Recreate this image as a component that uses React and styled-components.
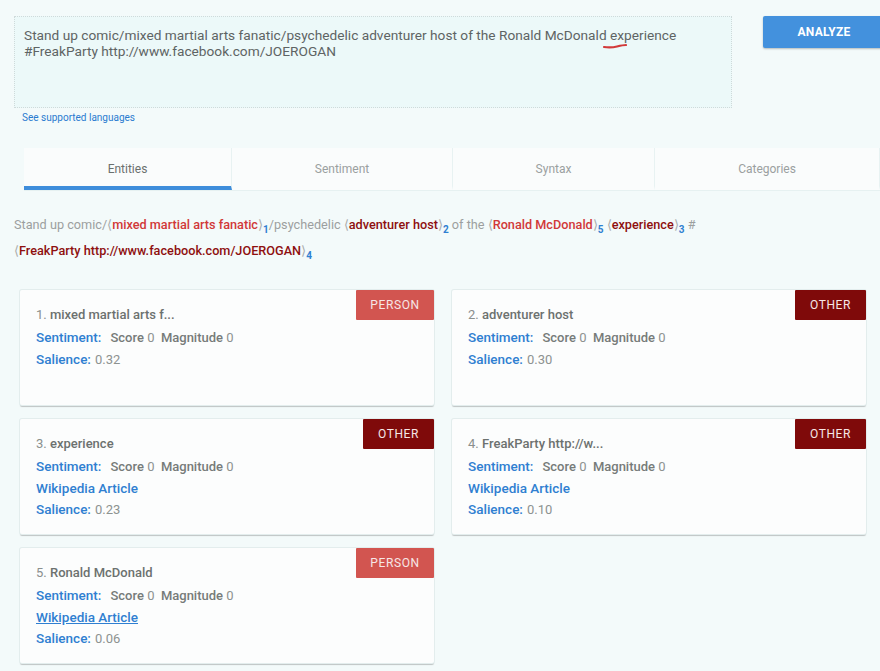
import React from 'react';
import styled, { createGlobalStyle } from 'styled-components';

const GlobalStyle = createGlobalStyle`
  html, body {
    margin: 0;
    padding: 0;
    background: #f3fafa;
    font-family: Roboto, 'Liberation Sans', Arial, sans-serif;
  }
`;

const Page = styled.div`
  width: 880px;
  height: 671px;
  overflow: hidden;
  box-sizing: border-box;
  padding-top: 16px;
`;

const InputRow = styled.div`
  display: flex;
  align-items: flex-start;
  padding-left: 14px;
  gap: 31px;
`;

const TextBox = styled.div`
  position: relative;
  flex-shrink: 0;
  width: 718px;
  height: 92px;
  box-sizing: border-box;
  padding: 10px 9px;
  background: #ecf9f9;
  border: 1px dotted #cfdada;
  color: #5e6464;
  font-size: 13.7px;
  line-height: 16px;
`;

const Squiggle = styled.svg`
  position: absolute;
  left: 588px;
  top: 26px;
`;

const AnalyzeButton = styled.button`
  width: 122px;
  height: 32px;
  flex-shrink: 0;
  border: none;
  border-radius: 2px;
  background: #4391dd;
  color: #fff;
  font-family: Roboto, 'Liberation Sans', Arial, sans-serif;
  font-size: 12px;
  font-weight: 700;
  letter-spacing: 0.3px;
  box-shadow: 0 1px 2px rgba(0, 0, 0, 0.25);
`;

const LangLink = styled.a`
  display: block;
  margin: 4px 0 0 22px;
  font-size: 10px;
  color: #2a7bd0;
  text-decoration: none;
`;

const TabBar = styled.div`
  display: flex;
  margin: 25px 0 0 24px;
  height: 42px;
  background: #fafcfc;
  border-bottom: 1px solid #e6f1f1;
`;

const Tab = styled.div`
  width: ${(p) => p.w}px;
  display: flex;
  align-items: center;
  justify-content: center;
  box-sizing: border-box;
  border-right: 1px solid #e8f2f2;
  font-size: 12px;
  color: ${(p) => (p.active ? '#6a706e' : '#9aa0a0')};
  border-bottom: 4px solid ${(p) => (p.active ? '#3e8ddb' : 'transparent')};
  padding-top: 3px;
`;

const Annotated = styled.p`
  margin: 21px 0 0 14px;
  font-size: 12.7px;
  line-height: 26px;
  color: #9c9f9f;
  width: 720px;
`;

const Ent = styled.span`
  color: ${(p) => (p.kind === 'PERSON' ? '#d13838' : '#8e0f0f')};
  font-weight: 500;
`;

const Bracket = styled.span`
  color: #a8acac;
`;

const Sub = styled.sub`
  color: #2f80d1;
  font-size: 10px;
  font-weight: 700;
  vertical-align: -4px;
  line-height: 0;
`;

const CardGrid = styled.div`
  display: grid;
  grid-template-columns: 414px 414px;
  column-gap: 18px;
  row-gap: 14px;
  margin: 26px 0 0 20px;
`;

const Card = styled.div`
  position: relative;
  height: 115px;
  box-sizing: border-box;
  padding: 16px 16px 0;
  background: #fcfdfd;
  border-radius: 2px;
  box-shadow: 0 0 0 1px #e3eded, 0 2px 1px rgba(0, 0, 0, 0.22);
`;

const Badge = styled.div`
  position: absolute;
  top: 0;
  right: 0;
  width: ${(p) => (p.kind === 'PERSON' ? 78 : 71)}px;
  height: 30px;
  display: flex;
  align-items: center;
  justify-content: center;
  background: ${(p) => (p.kind === 'PERSON' ? '#d25550' : '#7f0a0a')};
  color: #f6e6e6;
  font-size: 12px;
  letter-spacing: 0.6px;
  border-radius: 1px;
`;

const Title = styled.div`
  font-size: 13px;
  line-height: 18px;
  color: #8a8f8d;
  margin-bottom: 3px;

  b {
    color: #6c716f;
    font-weight: 500;
  }
`;

const Row = styled.div`
  font-size: 13px;
  line-height: 21.5px;
  color: #8d9290;
`;

const Label = styled.span`
  color: #2f7fd1;
  font-size: 13.5px;
  font-weight: 500;
  margin-right: ${(p) => p.gap || 4}px;
`;

const Strong = styled.span`
  color: #767b79;
  font-weight: 500;
`;

const WikiLink = styled.a`
  display: block;
  font-size: 13.5px;
  line-height: 21.5px;
  font-weight: 500;
  color: #2f7fd1;
  text-decoration: ${(p) => (p.hover ? 'underline' : 'none')};
`;

const entities = [
  { n: 1, name: 'mixed martial arts f...', kind: 'PERSON', salience: '0.32', wiki: false },
  { n: 2, name: 'adventurer host', kind: 'OTHER', salience: '0.30', wiki: false },
  { n: 3, name: 'experience', kind: 'OTHER', salience: '0.23', wiki: true },
  { n: 4, name: 'FreakParty http://w...', kind: 'OTHER', salience: '0.10', wiki: true },
  { n: 5, name: 'Ronald McDonald', kind: 'PERSON', salience: '0.06', wiki: true, hover: true },
];

const Mark = ({ kind, n, children }) => (
  <>
    <Bracket>⟨</Bracket>
    <Ent kind={kind}>{children}</Ent>
    <Bracket>⟩</Bracket>
    <Sub>{n}</Sub>
  </>
);

const App = () => (
  <Page>
    <GlobalStyle />
    <InputRow>
      <TextBox>
        Stand up comic/mixed martial arts fanatic/psychedelic adventurer host of the Ronald McDonald experience
        <br />
        #FreakParty http://www.facebook.com/JOEROGAN
        <Squiggle width="24" height="6" viewBox="0 0 24 6">
          <path d="M1 4 Q8 5 14 3.5 T23 2" stroke="#d23a3a" strokeWidth="2.2" fill="none" strokeLinecap="round" />
        </Squiggle>
      </TextBox>
      <AnalyzeButton>ANALYZE</AnalyzeButton>
    </InputRow>
    <LangLink href="#">See supported languages</LangLink>

    <TabBar>
      <Tab w={208} active>Entities</Tab>
      <Tab w={221}>Sentiment</Tab>
      <Tab w={202}>Syntax</Tab>
      <Tab w={225}>Categories</Tab>
    </TabBar>

    <Annotated>
      Stand up comic/<Mark kind="PERSON" n={1}>mixed martial arts fanatic</Mark>/psychedelic{' '}
      <Mark kind="OTHER" n={2}>adventurer host</Mark> of the <Mark kind="PERSON" n={5}>Ronald McDonald</Mark>{' '}
      <Mark kind="OTHER" n={3}>experience</Mark> #
      <br />
      <Mark kind="OTHER" n={4}>FreakParty http://www.facebook.com/JOEROGAN</Mark>
    </Annotated>

    <CardGrid>
      {entities.map((e) => (
        <Card key={e.n}>
          <Badge kind={e.kind}>{e.kind}</Badge>
          <Title>
            {e.n}. <b>{e.name}</b>
          </Title>
          <Row>
            <Label gap={9}>Sentiment:</Label>
            <Strong>Score</Strong> 0&nbsp; <Strong>Magnitude</Strong> 0
          </Row>
          {e.wiki && (
            <WikiLink href="#" hover={e.hover}>
              Wikipedia Article
            </WikiLink>
          )}
          <Row>
            <Label>Salience:</Label>
            {e.salience}
          </Row>
        </Card>
      ))}
    </CardGrid>
  </Page>
);

export default App;
